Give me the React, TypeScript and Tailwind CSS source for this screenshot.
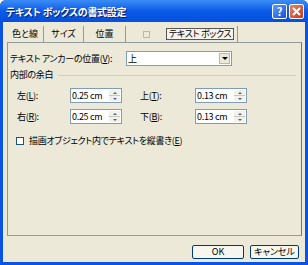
import React from "react"

const font = "[font-family:'Noto_Sans_CJK_JP','Noto_Sans',sans-serif] [font-feature-settings:'palt']"

function SpinBox({ value }: { value: string }) {
  return (
    <div className="flex h-[15px] w-[52px] items-center border border-[#7f9db9] bg-white">
      <span className="flex-1 pl-[1px] text-[9px] leading-none text-black">{value}</span>
      <div className="mr-[1px] flex h-[11px] w-[11px] flex-col bg-[#f2f1ea]">
        <div className="flex flex-1 items-center justify-center border-b border-[#c9c7ba]">
          <div className="h-0 w-0 border-x-[2px] border-b-[2px] border-x-transparent border-b-[#4d6185]" />
        </div>
        <div className="flex flex-1 items-center justify-center">
          <div className="h-0 w-0 border-x-[2px] border-t-[2px] border-x-transparent border-t-[#4d6185]" />
        </div>
      </div>
    </div>
  )
}

export default function App() {
  return (
    <div className={`flex h-[265px] w-[308px] flex-col overflow-hidden rounded-t-[6px] bg-[#0a54e4] ${font}`}>
      {/* title bar */}
      <div className="flex h-[22px] items-center bg-gradient-to-b from-[#3c8cf6] via-[#0b5ae8] to-[#0550dc] pl-[6px] pr-[4px]">
        <span className="flex-1 text-[10px] font-bold tracking-[-0.3px] text-white [text-shadow:1px_1px_0_#0a1e6e]">テキスト ボックスの書式設定</span>
        <div className="flex gap-[2px]">
          <div className="flex h-[15px] w-[15px] items-center justify-center rounded-[2px] border border-white bg-gradient-to-br from-[#5b9cff] to-[#1250e0] text-[11px] font-bold leading-none text-white">?</div>
          <div className="flex h-[15px] w-[15px] items-center justify-center rounded-[2px] border border-white bg-gradient-to-br from-[#e9825f] to-[#c4381a]">
            <svg width="9" height="9" viewBox="0 0 9 9"><path d="M1 1 L8 8 M8 1 L1 8" stroke="white" strokeWidth="2" /></svg>
          </div>
        </div>
      </div>

      {/* body */}
      <div className="mx-[3px] mb-[3px] flex flex-1 flex-col bg-[#ece9d8]">
        {/* tabs */}
        <div className="ml-[4px] mt-[4px] flex h-[16px] items-stretch text-[9px] text-black">
          <div className="flex w-[37px] items-center justify-center border-r border-[#919b9c]">色と線</div>
          <div className="flex w-[40px] items-center justify-center border-r border-[#919b9c]">サイズ</div>
          <div className="flex w-[42px] items-center justify-center border-r border-[#919b9c]">位置</div>
          <div className="flex w-[40px] items-center justify-center">
            <div className="h-[7px] w-[7px] border border-[#b8b8b0]" />
          </div>
          <div className="flex items-center border-r border-[#919b9c] pr-[3px]">
            <div className="border border-[#555] bg-[#f4f3ee] px-[2px] leading-[10px] tracking-[-0.3px]">テキスト ボックス</div>
          </div>
        </div>

        {/* panel */}
        <div className="ml-[4px] mr-[3px] flex h-[194px] flex-col border border-[#919b9c] border-r-[#6f7677] text-[9px] tracking-[-0.3px] text-black">
          <div className="ml-[2px] mt-[8px] flex h-[15px] items-center">
            <span className="w-[116px]">テキスト アンカーの位置(<span className="underline">V</span>):</span>
            <div className="flex h-[15px] w-[106px] items-center border border-[#7f9db9] bg-white">
              <span className="flex-1 pl-[1px]">上</span>
              <div className="mr-[1px] flex h-[11px] w-[11px] items-center justify-center border border-[#b8b8b0] bg-[#ece9d8]">
                <div className="h-0 w-0 border-x-[3px] border-t-[3px] border-x-transparent border-t-black" />
              </div>
            </div>
          </div>

          <div className="ml-[2px] mr-[5px] mt-[4px] flex h-[10px] items-center gap-[5px]">
            <span>内部の余白</span>
            <div className="h-0 flex-1 border-t border-[#d0d0bf]" />
          </div>

          <div className="ml-[9px] mt-[8px] flex flex-col gap-[6px]">
            <div className="flex items-center">
              <span className="w-[53px]">左(<span className="underline">L</span>):</span>
              <SpinBox value="0.25 cm" />
              <span className="ml-[18px] w-[55px]">上(<span className="underline">T</span>):</span>
              <SpinBox value="0.13 cm" />
            </div>
            <div className="flex items-center">
              <span className="w-[53px]">右(<span className="underline">R</span>):</span>
              <SpinBox value="0.25 cm" />
              <span className="ml-[18px] w-[55px]">下(<span className="underline">B</span>):</span>
              <SpinBox value="0.13 cm" />
            </div>
          </div>

          <div className="ml-[8px] mt-[10px] flex items-center gap-[5px]">
            <div className="h-[8px] w-[8px] border border-[#1c5180] bg-white" />
            <span>描画オブジェクト内でテキストを縦書き(<span className="underline">E</span>)</span>
          </div>
        </div>

        {/* buttons */}
        <div className="mr-[6px] mt-[9px] flex justify-end gap-[6px] text-[9px] text-black">
          <div className="flex h-[14px] w-[52px] items-center justify-center rounded-[2px] border border-[#003c74] bg-[#f6f5f0]">OK</div>
          <div className="flex h-[14px] w-[49px] items-center justify-center rounded-[2px] border border-[#003c74] bg-[#f6f5f0]">キャンセル</div>
        </div>
      </div>
    </div>
  )
}
